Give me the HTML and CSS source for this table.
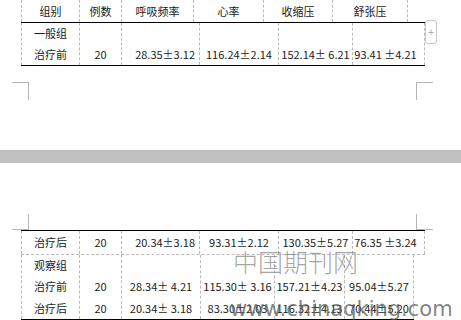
FILE: index.html
```html
<!DOCTYPE html>
<html lang="zh-CN">
<head>
<meta charset="utf-8">
<title>表格</title>
<link rel="stylesheet" href="styles.css">
</head>
<body>
<div class="sheet">
  <section class="page page-top">
    <div class="tbl">
      <div class="row row-head">
        <div class="cell">组别</div>
        <div class="cell">例数</div>
        <div class="cell">呼吸频率</div>
        <div class="cell">心率</div>
        <div class="cell">收缩压</div>
        <div class="cell">舒张压</div>
      </div>
      <div class="row row-body">
        <div class="cell"><div class="ln">一般组</div><div class="ln">治疗前</div></div>
        <div class="cell"><div class="ln"></div><div class="ln">20</div></div>
        <div class="cell num-r"><div class="ln"></div><div class="ln">28.35±3.12</div></div>
        <div class="cell"><div class="ln"></div><div class="ln">116.24±2.14</div></div>
        <div class="cell"><div class="ln"></div><div class="ln">152.14± 6.21</div></div>
        <div class="cell shift-l"><div class="ln"></div><div class="ln">93.41 ±4.21</div></div>
      </div>
    </div>
    <div class="add">+</div>
    <div class="marks marks-top">
      <span class="mark mark-tl"></span>
      <span class="mark mark-tr"></span>
    </div>
  </section>
  <div class="band"></div>
  <section class="page page-bottom">
    <div class="marks marks-bottom">
      <span class="mark mark-bl"></span>
      <span class="mark mark-br"></span>
    </div>
    <div class="tbl">
      <div class="row row-one">
        <div class="cell">治疗后</div>
        <div class="cell">20</div>
        <div class="cell num-r">20.34±3.18</div>
        <div class="cell">93.31±2.12</div>
        <div class="cell">130.35±5.27</div>
        <div class="cell shift-l">76.35 ±3.24</div>
      </div>
      <div class="row row-multi">
        <div class="cell"><div class="ln">观察组</div><div class="ln">治疗前</div><div class="ln">治疗后</div></div>
        <div class="cell"><div class="ln"></div><div class="ln">20</div><div class="ln">20</div></div>
        <div class="cell"><div class="ln"></div><div class="ln">28.34± 4.21</div><div class="ln">20.34± 3.18</div></div>
        <div class="cell"><div class="ln"></div><div class="ln">115.30± 3.16</div><div class="ln">83.30±2.03</div></div>
        <div class="cell"><div class="ln"></div><div class="ln">157.21±4.23</div><div class="ln">116.32±4.13</div></div>
        <div class="cell"><div class="ln"></div><div class="ln">95.04±5.27</div><div class="ln">70.44±5.20</div></div>
      </div>
    </div>
    <div class="watermark">
      <div class="wm-cn">中国期刊网</div>
      <div class="wm-url">www.chinaqking.com</div>
    </div>
  </section>
</div>
</body>
</html>
```

FILE: styles.css
```css
html, body {
  margin: 0;
  padding: 0;
  background: #ffffff;
}
body {
  width: 461px;
  height: 320px;
  overflow: hidden;
  font-family: "Noto Sans CJK SC", "Noto Sans", sans-serif;
  font-size: 11px;
  color: #1a1a1a;
}
.sheet {
  display: flex;
  flex-direction: column;
}
.page {
  position: relative;
}
.page-top {
  height: 150px;
}
.band {
  height: 13px;
  background: #c0c0c0;
}
.page-bottom {
  height: 157px;
  padding-top: 51px;
  box-sizing: border-box;
}
.tbl {
  margin-left: 21px;
  display: flex;
  flex-direction: column;
  align-items: flex-start;
}
.row {
  display: grid;
}
.cell {
  border-left: 1px dashed #b9b9b9;
  text-align: center;
  white-space: nowrap;
  box-sizing: border-box;
}
.cell:last-child {
  border-right: 1px dashed #b9b9b9;
}
.row-head {
  grid-template-columns: 58px 42px 72px 70px 69px 76px;
  height: 22px;
  line-height: 22px;
}
.row-body {
  grid-template-columns: 58px 42px 78px 79px 74px 73px;
  border-top: 1px solid #000;
  border-bottom: 1px solid #000;
}
.row-body .ln {
  height: 21px;
  line-height: 21px;
}
.row-one {
  grid-template-columns: 58px 42px 78px 79px 74px 73px;
  border-top: 1px solid #000;
  border-bottom: 1px dashed #b9b9b9;
  height: 23px;
  line-height: 22px;
}
.row-multi {
  grid-template-columns: 58px 42px 79px 74px 70px 70px;
  border-bottom: 1px solid #000;
}
.row-multi .ln {
  height: 21.4px;
  line-height: 21.4px;
}
.num-r {
  text-align: right;
  padding-right: 4px;
}
.shift-l {
  padding-right: 6px;
}
.add {
  position: absolute;
  left: 425px;
  top: 20px;
  width: 12px;
  height: 24px;
  box-sizing: border-box;
  border: 1px solid #c9c9c9;
  border-radius: 3px;
  color: #a8a8a8;
  font-family: "DejaVu Sans", sans-serif;
  font-size: 9px;
  line-height: 22px;
  text-align: center;
  background: #fff;
}
.marks {
  display: flex;
  justify-content: space-between;
  padding: 0 28px 0 12px;
}
.marks-top {
  margin-top: 16px;
}
.mark {
  display: block;
  box-sizing: border-box;
  width: 17px;
  border-color: #b5b5b5;
  border-style: solid;
  border-width: 0;
}
.mark-tl {
  height: 18px;
  border-top-width: 1px;
  border-right-width: 1px;
}
.mark-tr {
  height: 18px;
  border-top-width: 1px;
  border-left-width: 1px;
}
.mark-bl {
  height: 16px;
  border-right-width: 1px;
  border-bottom-width: 1px;
}
.mark-br {
  height: 16px;
  border-left-width: 1px;
  border-bottom-width: 1px;
}
.watermark {
  position: absolute;
  left: 230px;
  top: 84px;
  white-space: nowrap;
  pointer-events: none;
}
.wm-cn {
  margin-left: 3px;
  font-family: "Noto Sans CJK SC", sans-serif;
  font-weight: 300;
  font-size: 25px;
  line-height: 28px;
  color: rgba(105, 105, 105, 0.6);
}
.wm-url {
  margin-top: 24px;
  font-family: "DejaVu Sans", sans-serif;
  font-size: 21px;
  line-height: 21px;
  color: rgba(90, 90, 90, 0.75);
}
```
